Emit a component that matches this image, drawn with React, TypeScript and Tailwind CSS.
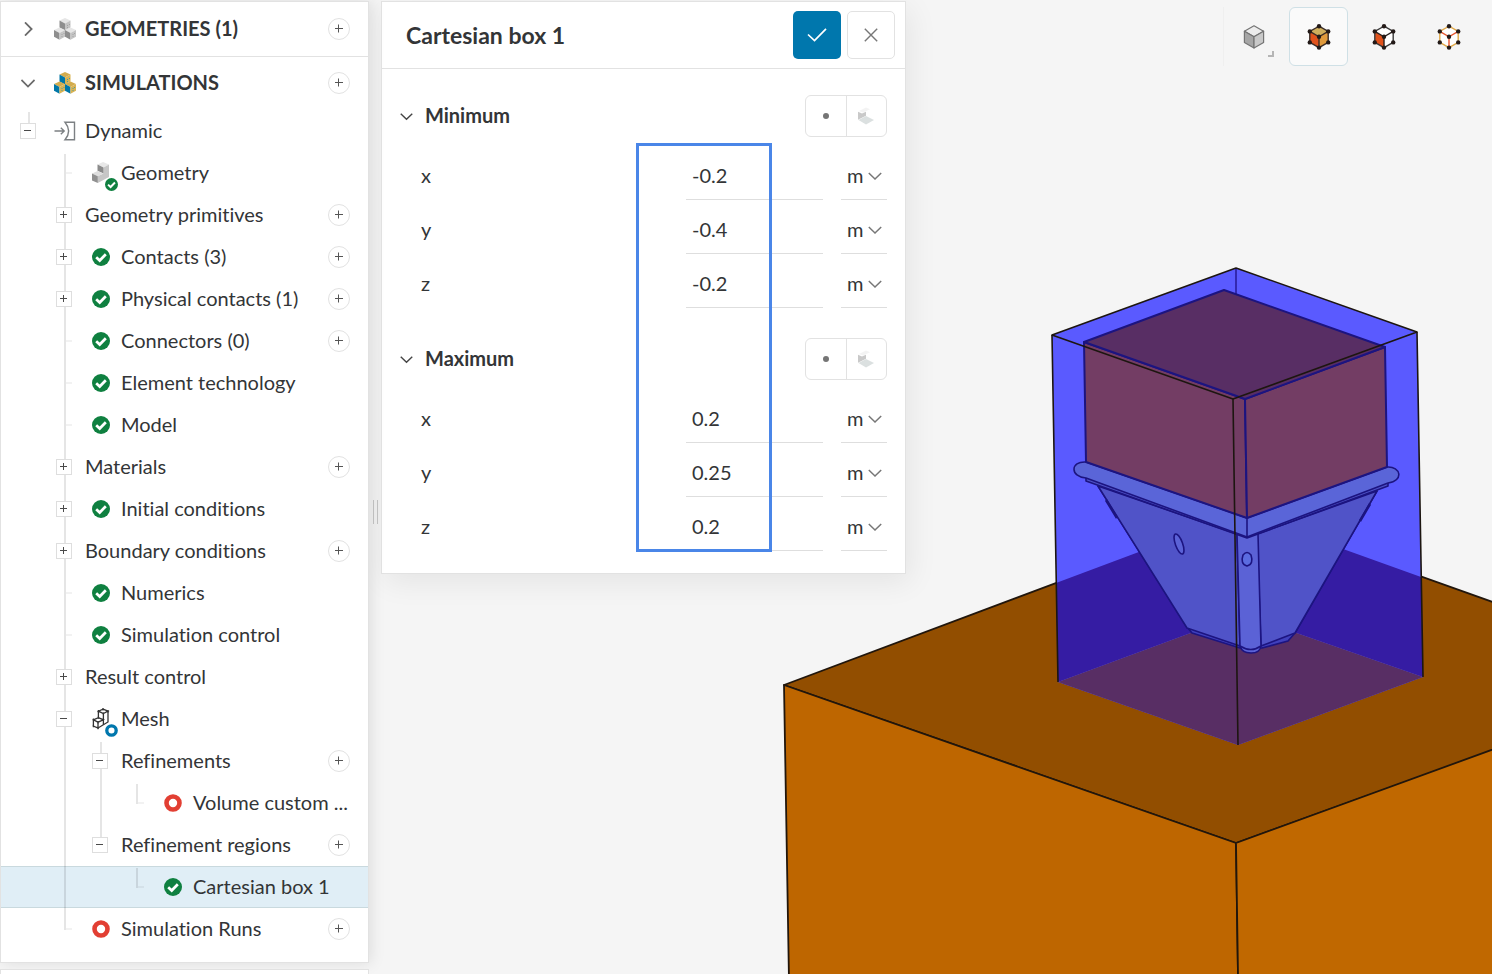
import React, { useState } from 'react';

type Guide = 'blank' | 'line' | 'tee' | 'first-tee' | 'end' | 'first-end' | 'plus' | 'minus' | 'first-minus' | 'last-minus' | 'root-minus';

interface TreeItem {
  label: string;
  guides: Guide[];
  icon?: React.ReactNode;
  canAdd?: boolean;
}

interface AxisField {
  axis: string;
  value: string;
}

const CheckBadge = ({ size = 18 }: { size?: number }) => (
  <svg width={size} height={size} viewBox="0 0 18 18">
    <circle cx="9" cy="9" r="9" fill="#0f8040" />
    <path d="M4.2 9.2 L7.7 12.5 L13.8 6.2" fill="none" stroke="#fff" strokeWidth="2.7" />
  </svg>
);

const RingBadge = ({ size = 18, color = '#e23f33' }: { size?: number; color?: string }) => (
  <svg width={size} height={size} viewBox="0 0 18 18">
    <circle cx="9" cy="9" r="6.5" fill="#fff" stroke={color} strokeWidth="4.6" />
  </svg>
);

interface CubeProps {
  x: number;
  y: number;
  top: string;
  left: string;
  right: string;
}

const Cube: React.FC<CubeProps> = ({ x, y, top, left, right }) => (
  <g transform={`translate(${x} ${y})`}>
    <path d="M0 -6 L5.5 -3.4 L0 -0.4 L-5.5 -3.4Z" fill={top} />
    <path d="M-5.5 -3.4 L0 -0.4 V6.4 L-5.5 3.4Z" fill={left} />
    <path d="M5.5 -3.4 L0 -0.4 V6.4 L5.5 3.4Z" fill={right} />
  </g>
);

const CubeStack = ({ colored = false }: { colored?: boolean }) => {
  const top = colored ? '#d3ac4e' : '#e6e6e6';
  const left = colored ? '#0077a8' : '#8e8e8e';
  const right = colored ? '#dab353' : '#c4c4c4';
  const dots = colored ? '#4c9aa0' : '#a4a4a4';
  return (
    <svg width="22" height="22" viewBox="0 0 22 22">
      <Cube x={11} y={6} top={top} left={left} right={right} />
      <Cube x={5.5} y={15.4} top={top} left={left} right={right} />
      <Cube x={16.5} y={15.4} top={top} left={left} right={right} />
      <path d="M13 7.5h1M15 6.5h1M13 9.5h1M7.5 16.5h1M9.5 15.5h1M7.5 18.5h1M18.5 16.5h1M20 15.5h1M18.5 18.5h1" stroke={dots} strokeWidth="1" />
    </svg>
  );
};

const DynamicIcon = () => (
  <svg width="22" height="20" viewBox="0 0 22 20" fill="none" stroke="#7c8083" strokeWidth="1.4">
    <path d="M0.5 10 H10 M6.8 6.8 L10.2 10 L6.8 13.2" />
    <path d="M11 1.2 H20.5 V18.8 H11 C15.8 13 15.8 7 11 1.2Z" />
  </svg>
);

const GeometryIcon = () => (
  <span className="relative block h-[22px] w-[18px]">
    <svg width="18" height="22" viewBox="0 0 18 22">
      <path d="M11 0 L17 2.6 L11.5 5.4 L5.5 2.6Z" fill="#e8e8e8" />
      <path d="M17 2.6 V15 L5.8 21 V14 L11.5 11.4 V5.4Z" fill="#c6c6c6" />
      <path d="M5.5 2.6 L11.5 5.4 V11.4 L5.5 8.8Z" fill="#8b8b8b" />
      <path d="M5.5 9 L11.5 11.4 L5.8 14.2 L0 11.6Z" fill="#dedede" />
      <path d="M0 11.6 L5.8 14.2 V21 L0 18.4Z" fill="#909090" />
    </svg>
    <span className="absolute top-4 left-[13px]"><CheckBadge size={13} /></span>
  </span>
);

const MeshIcon = () => (
  <span className="relative block h-[22px] w-[18px]">
    <svg width="18" height="22" viewBox="0 0 18 22" fill="none" stroke="#333" strokeWidth="1.3">
      <path d="M11 1.2 L16 3.2 L11.4 5.6 L6.4 3.2Z M6.4 3.2 V9.2 M11.4 5.6 V11.6 M16 3.2 V14 L6 20" />
      <path d="M6.4 9.6 L11.4 11.8 L6 14.2 L1.4 11.8Z M1.4 11.8 V18 L6 20 V14.2 M11.4 11.8 V16.8" />
      <path d="M10.4 1.2h1.2M15.4 3.2h1.2M10.8 5.6h1.2M5.8 3.2h1.2M5.8 9.6h1.2M10.8 11.8h1.2M0.8 11.8h1.2M5.4 14.2h1.2M0.8 18h1.2M5.4 20h1.2" strokeWidth="2.4" />
    </svg>
    <span className="absolute top-4 left-[13px]"><RingBadge size={13} color="#0077ad" /></span>
  </span>
);

const treeItems: TreeItem[] = [
  { label: 'Dynamic', guides: ['root-minus'], icon: <DynamicIcon /> },
  { label: 'Geometry', guides: ['blank', 'first-tee'], icon: <GeometryIcon /> },
  { label: 'Geometry primitives', guides: ['blank', 'plus'], canAdd: true },
  { label: 'Contacts (3)', guides: ['blank', 'plus'], icon: <CheckBadge />, canAdd: true },
  { label: 'Physical contacts (1)', guides: ['blank', 'plus'], icon: <CheckBadge />, canAdd: true },
  { label: 'Connectors (0)', guides: ['blank', 'tee'], icon: <CheckBadge />, canAdd: true },
  { label: 'Element technology', guides: ['blank', 'tee'], icon: <CheckBadge /> },
  { label: 'Model', guides: ['blank', 'tee'], icon: <CheckBadge /> },
  { label: 'Materials', guides: ['blank', 'plus'], canAdd: true },
  { label: 'Initial conditions', guides: ['blank', 'plus'], icon: <CheckBadge /> },
  { label: 'Boundary conditions', guides: ['blank', 'plus'], canAdd: true },
  { label: 'Numerics', guides: ['blank', 'tee'], icon: <CheckBadge /> },
  { label: 'Simulation control', guides: ['blank', 'tee'], icon: <CheckBadge /> },
  { label: 'Result control', guides: ['blank', 'plus'] },
  { label: 'Mesh', guides: ['blank', 'minus'], icon: <MeshIcon /> },
  { label: 'Refinements', guides: ['blank', 'line', 'first-minus'], canAdd: true },
  { label: 'Volume custom ...', guides: ['blank', 'line', 'line', 'first-end'], icon: <RingBadge /> },
  { label: 'Refinement regions', guides: ['blank', 'line', 'last-minus'], canAdd: true },
  { label: 'Cartesian box 1', guides: ['blank', 'line', 'blank', 'first-end'], icon: <CheckBadge /> },
  { label: 'Simulation Runs', guides: ['blank', 'end'], icon: <RingBadge />, canAdd: true },
];

const minimum: AxisField[] = [
  { axis: 'x', value: '-0.2' },
  { axis: 'y', value: '-0.4' },
  { axis: 'z', value: '-0.2' },
];

const maximum: AxisField[] = [
  { axis: 'x', value: '0.2' },
  { axis: 'y', value: '0.25' },
  { axis: 'z', value: '0.2' },
];

const GuideCell = ({ guide }: { guide: Guide }) => {
  if (guide === 'blank') return <span className="w-9 shrink-0" />;

  if (guide.endsWith('plus') || guide.endsWith('minus')) {
    const open = guide.endsWith('minus');
    const first = guide === 'first-minus' || guide === 'root-minus';
    const last = guide === 'last-minus' || guide === 'root-minus';
    return (
      <span className="flex w-9 shrink-0 flex-col self-stretch pl-[10px]">
        <span className="flex flex-1 flex-col">
          {first && <span className="h-[2px]" />}
          <span className="ml-2 w-[2px] flex-1 bg-black/10" />
        </span>
        <button type="button" aria-label={open ? 'Collapse' : 'Expand'} className="flex h-4 w-4 items-center justify-center border border-[#dedede] bg-white">
          <svg width="8" height="8" viewBox="0 0 8 8" stroke="#4a4a4a" strokeWidth="1">
            <path d={open ? 'M0 3.5H7' : 'M0 3.5H7M3.5 0V7'} />
          </svg>
        </button>
        <span className={last ? 'flex-1' : 'ml-2 w-[2px] flex-1 bg-black/10'} />
      </span>
    );
  }

  return (
    <span className="flex w-9 shrink-0 flex-col self-stretch pl-[18px]">
      {guide.startsWith('first') && <span className="h-[2px]" />}
      {guide === 'line' ? (
        <span className="w-[2px] flex-1 bg-black/10" />
      ) : (
        <>
          <span className={guide.startsWith('first') ? 'flex h-5 items-end' : 'flex h-[22px] items-end'}>
            <span className="h-full w-[2px] bg-black/10" />
            <span className="h-[2px] w-[6px] bg-black/5" />
          </span>
          <span className={guide.endsWith('end') ? 'flex-1' : 'w-[2px] flex-1 bg-black/10'} />
        </>
      )}
    </span>
  );
};

const AddButton = ({ label }: { label: string }) => (
  <button type="button" aria-label={`Add to ${label}`} className="ml-auto flex h-[22px] w-[22px] shrink-0 items-center justify-center rounded-full border border-[#e2e2e2] bg-white">
    <svg width="10" height="10" viewBox="0 0 10 10" stroke="#555" strokeWidth="1">
      <path d="M1 4.5H9M4.5 0.5V8.5" />
    </svg>
  </button>
);

const Chevron = ({ size = 14, color = '#777' }: { size?: number; color?: string }) => (
  <svg width={size} height={size} viewBox="0 0 14 14" fill="none" stroke={color} strokeWidth="1.5">
    <path d="M0.8 4 L7 10 L13.2 4" />
  </svg>
);

const Sidebar = () => {
  const [selected, setSelected] = useState('Cartesian box 1');

  return (
    <aside className="relative z-10 flex w-[369px] shrink-0 flex-col gap-[6px] pt-px">
      <nav className="border border-[#e2e2e2] bg-white pb-3 shadow-[2px_0_14px_rgba(0,0,0,0.10)]">
        <div className="flex h-[55px] items-center border-b border-[#e2e2e2] pr-[18px] pl-[20px]">
          <button type="button" aria-label="Expand geometries" className="w-[33px] shrink-0">
            <svg width="14" height="14" viewBox="0 0 14 14" fill="none" stroke="#6b6b6b" strokeWidth="1.8"><path d="M4 0.4 L10.6 7 L4 13.6" /></svg>
          </button>
          <CubeStack />
          <h2 className="pb-[2px] pl-[9px] text-[20px] leading-6 font-bold">GEOMETRIES (1)</h2>
          <AddButton label="geometries" />
        </div>
        <div className="flex h-[52px] items-center pr-[18px] pl-[20px]">
          <button type="button" aria-label="Collapse simulations" className="w-[33px] shrink-0">
            <svg width="14" height="14" viewBox="0 0 14 14" fill="none" stroke="#6b6b6b" strokeWidth="1.8"><path d="M0.4 4 L7 10.6 L13.6 4" /></svg>
          </button>
          <CubeStack colored />
          <h2 className="pb-[2px] pl-[9px] text-[20px] leading-6 font-bold">SIMULATIONS</h2>
          <AddButton label="simulations" />
        </div>
        <ul className="pt-px">
          {treeItems.map((item) => (
            <li
              key={item.label}
              onClick={() => setSelected(item.label)}
              className={`flex h-[42px] items-center pr-[18px] pl-[9px] ${item.label === selected ? 'bg-[#e0eef6] shadow-[inset_0_1px_0_#c9d9de,inset_0_-1px_0_#c9d9de]' : ''}`}
            >
              {item.guides.map((guide, i) => (
                <GuideCell key={i} guide={guide} />
              ))}
              {item.icon && <span className="flex w-9 shrink-0 items-center justify-center pl-[2px]">{item.icon}</span>}
              <span className="pb-[2px] pl-[3px] text-[20px] leading-6 whitespace-nowrap">{item.label}</span>
              {item.canAdd && <AddButton label={item.label} />}
            </li>
          ))}
        </ul>
      </nav>
      <div className="flex-1 border border-b-0 border-[#e2e2e2] bg-white" />
    </aside>
  );
};

const CoordinateGroup = ({ title, fields }: { title: string; fields: AxisField[] }) => (
  <section>
    <div className="mb-[9px] flex h-[42px] items-center">
      <button type="button" className="flex items-center gap-3 text-[20px] leading-6 font-bold">
        <Chevron size={13} color="#444" />
        <span className="pb-[2px]">{title}</span>
      </button>
      <div className="ml-auto flex h-[42px] w-[82px] rounded-md border border-[#e2e2e2]">
        <button type="button" aria-label={`Pick point for ${title}`} className="flex flex-1 items-center justify-center border-r border-[#e2e2e2]">
          <span className="h-[6px] w-[6px] rounded-full bg-[#757575]" />
        </button>
        <button type="button" aria-label={`Pick face for ${title}`} className="flex flex-1 items-center justify-center">
          <svg width="16" height="18" viewBox="0 0 16 18">
            <path d="M8 0.5 L12 2.2 L5 5.6 L1 4Z" fill="#f3f3f3" />
            <path d="M0 4.8 L4 6.6 L8 4.8 V8.8 L0 12.8Z" fill="#c9c9c9" />
            <path d="M0.5 13 L8 9 L16 13 L8 17.6Z" fill="#dbe0e0" />
          </svg>
        </button>
      </div>
    </div>
    {fields.map(({ axis, value }) => {
      const id = `${title}-${axis}`;
      return (
        <div key={axis} className="flex h-[54px] items-end pl-[21px]">
          <label htmlFor={id} className="flex h-12 flex-1 items-center pb-[2px] text-[20px] leading-6">{axis}</label>
          <input id={id} defaultValue={value} className="h-12 w-[137px] border-b border-[#dedede] bg-transparent px-[6px] pb-[2px] text-[20px] leading-6 outline-none" />
          <div className="relative ml-[18px] w-[46px]">
            <select aria-label={`${title} ${axis} unit`} className="block h-12 w-full appearance-none border-b border-[#dedede] bg-transparent pb-[2px] pl-[6px] text-[20px] leading-6 outline-none">
              <option>m</option>
            </select>
            <span className="pointer-events-none absolute top-[17px] right-[5px]"><Chevron /></span>
          </div>
        </div>
      );
    })}
  </section>
);

const BoxPanel = () => (
  <form className="relative mt-px w-[525px] shrink-0 self-start border border-[#e2e2e2] bg-white shadow-[4px_8px_28px_rgba(0,0,0,0.07)]">
    <header className="flex h-[67px] items-center gap-[6px] border-b border-[#e2e2e2] pr-[10px] pl-6">
      <h1 className="flex-1 text-[23px] leading-7 font-bold">Cartesian box 1</h1>
      <button type="button" aria-label="Apply" className="flex h-12 w-12 items-center justify-center rounded-[5px] bg-[#0077ad]">
        <svg width="20" height="16" viewBox="0 0 20 16" fill="none" stroke="#fff" strokeWidth="1.7"><path d="M1 7.5 L7.5 13.5 L19 1.8" /></svg>
      </button>
      <button type="button" aria-label="Close" className="flex h-12 w-12 items-center justify-center rounded-[5px] border border-[#e2e2e2]">
        <svg width="14" height="14" viewBox="0 0 14 14" fill="none" stroke="#777" strokeWidth="1.4"><path d="M0.8 0.8 L13.2 13.2 M13.2 0.8 L0.8 13.2" /></svg>
      </button>
    </header>
    <div className="flex flex-col gap-[30px] pt-[26px] pr-[18px] pb-[22px] pl-[18px]">
      <CoordinateGroup title="Minimum" fields={minimum} />
      <CoordinateGroup title="Maximum" fields={maximum} />
    </div>
    {/* Highlight around the editable coordinates */}
    <div className="pointer-events-none absolute top-[141px] left-[254px] h-[409px] w-[136px] border-[3px] border-[#4a86e8]" />
  </form>
);

interface SelectCubeProps {
  top?: string;
  left?: string;
  right?: string;
  edge: string;
  inner: string;
}

const SelectCube: React.FC<SelectCubeProps> = ({ top = 'none', left = 'none', right = 'none', edge, inner }) => (
  <svg width="24" height="28" viewBox="0 0 24 28">
    <path d="M12 3.2 L21.2 8.4 L12 13.8 L2.8 8.4Z" fill={top} />
    <path d="M2.8 8.4 L12 13.8 V24.6 L2.8 19.4Z" fill={left} />
    <path d="M21.2 8.4 L12 13.8 V24.6 L21.2 19.4Z" fill={right} />
    <path d="M12 3.2 L21.2 8.4 V19.4 L12 24.6 L2.8 19.4 V8.4Z" fill="none" stroke={edge} strokeWidth="1.4" />
    <path d="M2.8 8.4 L12 13.8 L21.2 8.4 M12 13.8 V24.6" fill="none" stroke={inner} strokeWidth="1.4" />
    <g fill="#231a18">
      <circle cx="12" cy="3.2" r="2.2" />
      <circle cx="21.2" cy="8.4" r="2.2" />
      <circle cx="21.2" cy="19.4" r="2.2" />
      <circle cx="12" cy="24.6" r="2.2" />
      <circle cx="2.8" cy="19.4" r="2.2" />
      <circle cx="2.8" cy="8.4" r="2.2" />
      <circle cx="12" cy="13.8" r="2.2" />
    </g>
  </svg>
);

const Toolbar = () => (
  <div className="mt-[7px] mr-[14px] ml-auto flex gap-[6px] self-start border-l border-[#efefef]">
    <button type="button" aria-label="Render mode" className="relative flex h-[59px] w-[59px] items-center justify-center">
      <svg width="22" height="26" viewBox="0 0 22 26" stroke="#747474" strokeWidth="1.2" strokeLinejoin="round">
        <path d="M11 1.8 L20.6 7.2 L11 12.8 L1.4 7.2Z" fill="#ececec" />
        <path d="M1.4 7.2 L11 12.8 V24 L1.4 18.6Z" fill="#a6a6a6" />
        <path d="M20.6 7.2 L11 12.8 V24 L20.6 18.6Z" fill="#c9c9c9" />
      </svg>
      <span className="absolute right-[9px] bottom-[9px] h-[6px] w-[6px] border-r-2 border-b-2 border-[#b5b5b5]" />
    </button>
    <button type="button" aria-label="Select volumes" aria-pressed="true" className="flex h-[59px] w-[59px] items-center justify-center rounded-md border border-[#cfe0e6] bg-[#fafafa]">
      <SelectCube top="#cfae5c" left="#e0521c" right="#e09a3c" edge="#3a2c26" inner="#3a2c26" />
    </button>
    <button type="button" aria-label="Select faces" className="flex h-[59px] w-[59px] items-center justify-center">
      <SelectCube top="#fff" left="#e0521c" right="#fff" edge="#3a3a3a" inner="#2a2220" />
    </button>
    <button type="button" aria-label="Select edges" className="flex h-[59px] w-[59px] items-center justify-center">
      <SelectCube top="#fff" left="#fff" right="#fff" edge="#e0a848" inner="#e8542c" />
    </button>
  </div>
);

const Scene = () => (
  <svg className="absolute inset-0 h-full w-full" viewBox="369 0 1123 974" preserveAspectRatio="xMaxYMid slice" strokeLinejoin="round">
    {/* Ground block */}
    <g stroke="#21160c" strokeWidth="1.8">
      <path d="M784 685 L1243 513 L1700 676 L1236 843Z" fill="#924e00" />
      <path d="M784 685 L1236 843 L1239 1040 H790Z" fill="#be6600" />
      <path d="M1236 843 L1700 674 V1040 H1239Z" fill="#c06800" />
    </g>

    {/* Translucent cartesian box */}
    <path d="M1052 335 L1236 268 L1417 332 L1423 677 L1238 745 L1058 682Z" fill="#5a5aff" />
    <path d="M1056 583 L1243 513 L1421 577 L1423 677 L1242 614 L1058 682Z" fill="#351ca3" />
    <path d="M1058 682 L1242 614 L1423 677 L1238 745Z" fill="#582e64" />
    <path d="M1236 268 V296" stroke="#2a1c9c" strokeWidth="1.6" />

    {/* Hopper */}
    <g stroke="#1c1480" strokeWidth="1.6">
      <path d="M1098 486 L1187 627 L1192 633 L1240 648 L1262 648 L1288 641 L1295 633 L1377 491 L1247 530Z" fill="#4040bd" />
      <path d="M1098 486 L1187 628 L1240 646 L1237 534Z" fill="#5053c8" />
      <path d="M1377 491 L1295 633 L1261 646 L1257 534Z" fill="#5053c8" />
      <path d="M1106 500 L1117 518 M1370 504 L1360 521" strokeWidth="2.6" />
      <path d="M1237 534 L1240 646 Q1242 653 1251 653 Q1260 653 1261 646 L1258 534Z" fill="#5b62d6" />
      <path d="M1240 646 Q1251 653 1261 646" fill="none" />
      <ellipse cx="1179" cy="544" rx="3.6" ry="10.6" transform="rotate(-20 1179 544)" fill="#5b62d6" />
      <path d="M1243 555 Q1247 550 1251 555 Q1254 564 1247 566 Q1240 564 1243 555Z" fill="#5b6ce0" />
      <path d="M1086 477 V481 L1247 538 L1388 486 V480Z" fill="#4f52c6" />
      <path d="M1086 462 C1070 461 1070 477 1086 478 L1247 537 L1388 483 C1404 481 1401 466 1387 467 L1247 518Z" fill="#5a65d8" />
      <path d="M1247 518 V538" />
    </g>

    {/* Part inside the box */}
    <g stroke="#1c1480" strokeWidth="2">
      <path d="M1084 342 L1245 399 L1247 518 L1086 462Z" fill="#733d64" />
      <path d="M1245 399 L1385 347 L1387 467 L1247 518Z" fill="#733d64" />
      <path d="M1084 342 L1224 290 L1385 347 L1245 399Z" fill="#582e64" />
    </g>

    <g fill="none" stroke="#1d1610" strokeWidth="1.6">
      <path d="M1052 335 L1236 268 L1417 332 L1233 399Z" />
      <path d="M1052 335 L1058 682 M1417 332 L1423 677 M1233 399 L1238 745" />
    </g>
  </svg>
);

const App = () => {
  return (
    <div className="flex h-screen overflow-hidden bg-[#f5f5f5] font-[Lato,sans-serif] text-[#333537] [font-variant-ligatures:none]">
      <Sidebar />
      <main className="relative flex-1">
        <Scene />
        <div className="relative flex h-full">
          <div className="flex w-3 shrink-0 items-center justify-center gap-[3px] pt-[50px]">
            <span className="h-6 w-px bg-[#c8c8c8]" />
            <span className="h-6 w-px bg-[#c8c8c8]" />
          </div>
          <BoxPanel />
          <Toolbar />
        </div>
      </main>
    </div>
  );
};

export default App;
